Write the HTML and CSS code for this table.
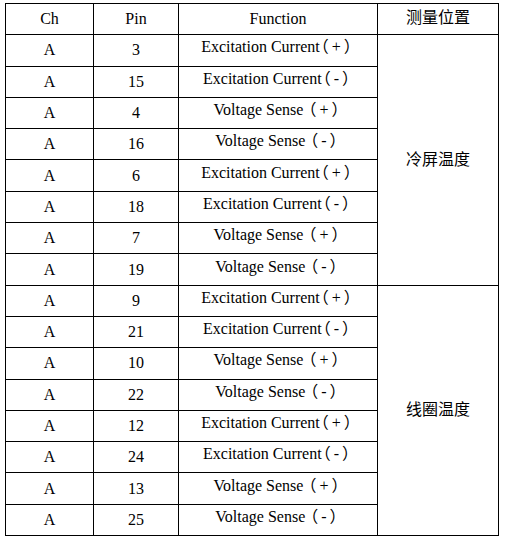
FILE: index.html
```html
<!DOCTYPE html>
<html lang="zh">
<head>
<meta charset="utf-8">
<title>Pin table</title>
<link rel="stylesheet" href="styles.css">
</head>
<body>
<div class="page">
<table class="pins">
<colgroup>
<col class="c-ch"><col class="c-pin"><col class="c-fn"><col class="c-loc">
</colgroup>
<thead>
<tr><th>Ch</th><th>Pin</th><th>Function</th><th class="cjk head-loc">测量位置</th></tr>
</thead>
<tbody>
<tr><td>A</td><td>3</td><td class="fn">Excitation Current<span class="par">（+）</span></td><td class="cjk loc" rowspan="8">冷屏温度</td></tr>
<tr><td>A</td><td>15</td><td class="fn">Excitation Current<span class="par">（-）</span></td></tr>
<tr><td>A</td><td>4</td><td class="fn">Voltage Sense <span class="par">（+）</span></td></tr>
<tr><td>A</td><td>16</td><td class="fn">Voltage Sense <span class="par">（-）</span></td></tr>
<tr><td>A</td><td>6</td><td class="fn">Excitation Current<span class="par">（+）</span></td></tr>
<tr><td>A</td><td>18</td><td class="fn">Excitation Current<span class="par">（-）</span></td></tr>
<tr><td>A</td><td>7</td><td class="fn">Voltage Sense <span class="par">（+）</span></td></tr>
<tr><td>A</td><td>19</td><td class="fn">Voltage Sense <span class="par">（-）</span></td></tr>
<tr><td>A</td><td>9</td><td class="fn">Excitation Current<span class="par">（+）</span></td><td class="cjk loc" rowspan="8">线圈温度</td></tr>
<tr><td>A</td><td>21</td><td class="fn">Excitation Current<span class="par">（-）</span></td></tr>
<tr><td>A</td><td>10</td><td class="fn">Voltage Sense <span class="par">（+）</span></td></tr>
<tr><td>A</td><td>22</td><td class="fn">Voltage Sense <span class="par">（-）</span></td></tr>
<tr><td>A</td><td>12</td><td class="fn">Excitation Current<span class="par">（+）</span></td></tr>
<tr><td>A</td><td>24</td><td class="fn">Excitation Current<span class="par">（-）</span></td></tr>
<tr><td>A</td><td>13</td><td class="fn">Voltage Sense <span class="par">（+）</span></td></tr>
<tr><td>A</td><td>25</td><td class="fn">Voltage Sense <span class="par">（-）</span></td></tr>
</tbody>
</table>
</div>
</body>
</html>
```
FILE: styles.css
```css
html, body {
  margin: 0;
  padding: 0;
  background: #ffffff;
}
.page {
  padding: 3px 0 0 5px;
}
.pins {
  border-collapse: collapse;
  table-layout: fixed;
  width: 493px;
  font-family: "Liberation Serif", "Times New Roman", "Noto Sans CJK SC", serif;
  font-size: 16px;
  color: #000000;
}
.c-ch { width: 88px; }
.c-pin { width: 85px; }
.c-fn { width: 199px; }
.c-loc { width: 121px; }
.pins tr {
  height: 31.3px;
}
.pins th,
.pins td {
  border: 1px solid #000000;
  padding: 0;
  text-align: center;
  vertical-align: middle;
  font-weight: normal;
  line-height: 18px;
  white-space: nowrap;
}
.pins .fn {
  padding-bottom: 6px;
}
.pins .par {
  font-feature-settings: "halt";
  letter-spacing: 3px;
  margin-left: 1px;
}
.pins .cjk {
  font-family: "Noto Sans CJK SC", sans-serif;
  font-size: 16px;
}
.pins .head-loc {
  padding-bottom: 6px;
}
.pins .loc {
  padding-bottom: 4px;
}
```
